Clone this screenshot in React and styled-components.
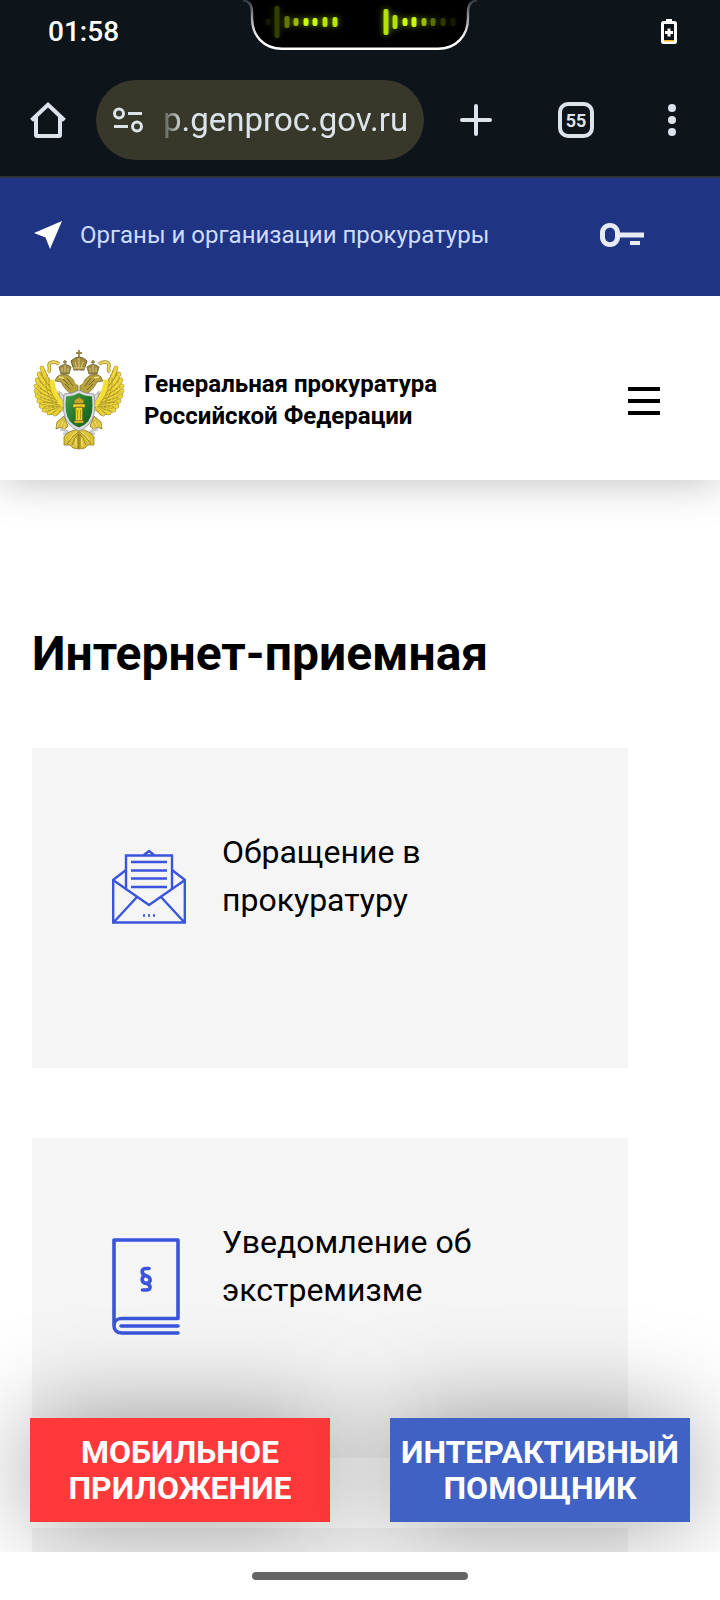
import styled, { createGlobalStyle } from "styled-components";

const GlobalStyle = createGlobalStyle`
  * {
    box-sizing: border-box;
  }

  body {
    margin: 0;
    background-color: #fff;
    color: #000;
    font-family: Roboto, "Noto Sans", sans-serif;
  }

  button {
    padding: 0;
    border: 0;
    background: none;
    color: inherit;
    font: inherit;
    cursor: pointer;
  }

  a {
    color: inherit;
    text-decoration: none;
  }

  svg {
    display: block;
    flex-shrink: 0;
  }
`;

const Screen = styled.div`
  display: flex;
  flex-direction: column;
  height: 100vh;
`;

/* phone status bar and browser toolbar */

const StatusBar = styled.div`
  display: grid;
  grid-template-columns: 1fr auto 1fr;
  align-items: center;
  height: 64px;
  padding: 0 43px;
  background-color: #0d141a;
  color: #fff;

  > time {
    padding-left: 5px;
    font-size: 28px;
    font-weight: 500;
    line-height: 32px;
  }

  > .notch {
    align-self: start;
  }

  > .battery {
    justify-self: end;
  }
`;

const Toolbar = styled.div`
  display: grid;
  grid-template-columns: 96px minmax(0, 1fr) 104px 96px 96px;
  align-items: center;
  height: 114px;
  border-bottom: 2px solid #2c333b;
  background-color: #0d141a;
  color: #dde3ea;
`;

const ToolButton = styled.button`
  display: flex;
  justify-content: center;
  align-items: center;
  height: 80px;
`;

const TabCount = styled.span`
  display: flex;
  justify-content: center;
  align-items: center;
  width: 36px;
  height: 36px;
  border: 4px solid #dde3ea;
  border-radius: 10px;
  font-size: 18px;
  font-weight: 700;
`;

const AddressBar = styled.div`
  display: flex;
  align-items: center;
  gap: 20px;
  height: 80px;
  padding: 0 12px 0 16px;
  border-radius: 40px;
  background-color: #373829;

  > input {
    flex: 1;
    min-width: 0;
    padding: 0;
    border: 0;
    outline: 0;
    background: none;
    color: #dde3ea;
    font-family: Roboto, sans-serif;
    font-size: 33px;
    line-height: 40px;
    mask-image: linear-gradient(to right, rgba(0, 0, 0, 0.2), #000 20px);
  }
`;

/* site */

const Viewport = styled.div`
  position: relative;
  flex: 1;
  min-height: 0;
`;

const Scroller = styled.div`
  height: 100%;
  overflow-y: auto;
  scrollbar-width: none;
`;

const TopBar = styled.div`
  position: relative;
  z-index: 1;
  display: flex;
  justify-content: space-between;
  align-items: center;
  height: 118px;
  padding: 0 76px 4px 34px;
  background-color: #1f3583;

  > a {
    display: flex;
    align-items: center;
    gap: 18px;
    color: #cfdcff;
    font-size: 24px;
    line-height: 32px;
  }
`;

const Header = styled.header`
  display: flex;
  justify-content: space-between;
  align-items: center;
  padding: 54px 60px 30px 32px;
  background-color: #fff;
  box-shadow: 0 2px 40px rgba(0, 0, 0, 0.25);
`;

const Brand = styled.a`
  display: flex;
  align-items: center;
  gap: 18px;
  font-size: 24px;
  font-weight: 700;
  line-height: 32px;
`;

const MenuButton = styled.button`
  display: flex;
  flex-direction: column;
  gap: 8px;
  width: 32px;
  padding-top: 2px;

  > span {
    height: 4px;
    background-color: #000;
  }
`;

const Main = styled.main`
  padding: 144px 92px 0 32px;

  > h1 {
    margin: 0 0 64px;
    font-size: 48px;
    font-weight: 700;
    line-height: 60px;
  }
`;

const CardList = styled.div`
  display: flex;
  flex-direction: column;
  gap: 70px;
`;

const Card = styled.a`
  display: grid;
  grid-template-columns: 110px 1fr;
  align-items: start;
  height: 320px;
  padding: 80px;
  background-color: #f5f5f5;
  font-size: 32px;
  line-height: 48px;

  > svg {
    margin-top: 20px;
  }
`;

const FloatingBar = styled.div`
  position: absolute;
  right: 0;
  bottom: 0;
  left: 0;
  display: grid;
  grid-template-columns: 1fr 1fr;
  gap: 60px;
  padding: 120px 30px 30px;
  overflow: hidden;
  pointer-events: none;
`;

const FloatingButton = styled.button`
  padding: 16px 0;
  background-color: ${(props) => props.$color};
  box-shadow: 0 0 100px rgba(0, 0, 0, 0.4);
  color: #fff;
  font-size: 32px;
  font-weight: 700;
  line-height: 36px;
  text-transform: uppercase;
  pointer-events: auto;
`;

const GestureBar = styled.div`
  display: flex;
  justify-content: center;
  align-items: center;
  height: 48px;
  background-color: #fff;

  > span {
    width: 30%;
    height: 8px;
    border-radius: 4px;
    background-color: #666;
  }
`;

// x, top, bottom, color
const equalizer = [
  [28, 19, 25, "#161b00"],
  [37, 6, 38, "#333f00"],
  [47, 16, 28, "#627900"],
  [56, 18, 26, "#98bd00"],
  [66, 18, 26, "#ccff00"],
  [75, 18, 26, "#ccff00"],
  [85, 17, 27, "#b5e300"],
  [95, 17, 27, "#b9e800"],
  [146, 9, 35, "#b5e300"],
  [155, 15, 29, "#b5e300"],
  [165, 18, 26, "#ccff00"],
  [174, 17, 27, "#ccff00"],
  [184, 18, 26, "#98bd00"],
  [193, 18, 26, "#586e00"],
  [203, 18, 26, "#2e3900"],
  [213, 18, 26, "#161b00"],
];

const Notch = () => (
  <svg className="notch" width="240" height="52" viewBox="0 0 240 52" fill="none">
    <defs>
      <linearGradient id="edge" x1="0" y1="0" x2="0" y2="50" gradientUnits="userSpaceOnUse">
        <stop offset="0" stopColor="#2d343a" />
        <stop offset="0.3" stopColor="#909396" />
        <stop offset="0.8" stopColor="#fff" />
      </linearGradient>
      <filter id="glow" x="0" y="0" width="240" height="52" filterUnits="userSpaceOnUse">
        <feGaussianBlur stdDeviation="3" />
      </filter>
    </defs>
    <path
      d="M3 0C9 1 12 5 12 11V18C12 36 24 48.800 42 48.800H198C216 48.800 228 36 228 18V11C228 5 231 1 237 0"
      fill="#000"
      stroke="url(#edge)"
      strokeWidth="2.400"
    />
    <g filter="url(#glow)" opacity="0.5">
      {equalizer.map(([x, top, bottom, color]) => (
        <rect key={x} x={x - 3} y={top} width="6" height={bottom - top} fill={color} />
      ))}
    </g>
    {equalizer.map(([x, top, bottom, color]) => (
      <rect
        key={x}
        x={x - 2.5}
        y={top}
        width="5"
        height={bottom - top}
        rx="2"
        fill={color}
      />
    ))}
  </svg>
);

const BatteryIcon = () => (
  <svg className="battery" width="16" height="26" viewBox="0 0 16 26">
    <path d="M5 0h6v3H5z" fill="#fff" />
    <rect x="1.5" y="3.5" width="13" height="20" rx="1" fill="none" stroke="#fff" strokeWidth="3" />
    <path d="M3 21h10v1.500H3z" fill="#f5b829" />
    <path d="M8 9.500v8M4 13.500h8" stroke="#fff" strokeWidth="3" />
  </svg>
);

const HomeIcon = () => (
  <svg width="36" height="36" viewBox="0 0 36 36" fill="none" stroke="currentColor" strokeWidth="4">
    <path d="M1.500 18.300L18 2.800L34.500 18.300" />
    <path d="M6 14V33a1 1 0 0 0 1 1H29a1 1 0 0 0 1-1V14" />
  </svg>
);

const TuneIcon = () => (
  <svg width="31" height="28" viewBox="0 0 31 28" fill="none" stroke="#dde3ea" strokeWidth="3">
    <circle cx="7" cy="7.500" r="4.500" />
    <path d="M16 7.500h14M2 20.500h14" />
    <circle cx="25" cy="20.500" r="4.500" />
  </svg>
);

const PlusIcon = () => (
  <svg width="32" height="32" viewBox="0 0 32 32" stroke="currentColor" strokeWidth="4" strokeLinecap="round">
    <path d="M16 2v28M2 16h28" />
  </svg>
);

const DotsIcon = () => (
  <svg width="8" height="32" viewBox="0 0 8 32" fill="currentColor">
    <circle cx="4" cy="4" r="4" />
    <circle cx="4" cy="16" r="4" />
    <circle cx="4" cy="28" r="4" />
  </svg>
);

const ArrowIcon = () => (
  <svg width="28" height="28" viewBox="0 0 28 28" fill="#fff">
    <path d="M28 0L0 12L11.500 16.500L16 28z" />
  </svg>
);

const KeyIcon = () => (
  <svg width="44" height="24" viewBox="0 0 44 24" fill="#e8ebf3">
    <path
      fillRule="evenodd"
      d="M10 0c6 0 10 4.500 10 10v4c0 5.500-4 10-10 10S0 19.500 0 14v-4C0 4.500 4 0 10 0zm0 4.800c-3 0-5 2.200-5 5.200v4c0 3 2 5.200 5 5.200s5-2.200 5-5.200v-4c0-3-2-5.200-5-5.200z"
    />
    <path d="M19 9.500h25v5H19zM30 18h10v4H30z" />
  </svg>
);

// feather tips of the left wing and where each one grows from
const feathers = [
  [9, 18, 26, 47],
  [6, 24, 26, 48],
  [4, 30, 26, 49],
  [3, 36, 26, 50],
  [3, 41, 27, 52],
  [4, 46, 28, 54],
  [6, 51, 28, 55],
  [8, 56, 29, 56],
  [11, 60, 29, 57],
  [16, 63, 29, 57],
  [22, 64, 30, 57],
];

const EagleHalf = () => (
  <g>
    <path d="M9 19L25 46L30 60L20 62L8 56L5 44L5 28z" fill="#c2aa33" />
    <g strokeLinecap="round">
      {feathers.map(([x, y, fromX, fromY]) => (
        <g key={y}>
          <path d={`M${fromX} ${fromY}Q${(x + fromX) / 2 - 3} ${(y + fromY) / 2 + 3} ${x} ${y}`} stroke="#a08e38" strokeWidth="4.600" />
          <path d={`M${fromX} ${fromY}Q${(x + fromX) / 2 - 3} ${(y + fromY) / 2 + 3} ${x} ${y}`} stroke="#ecd536" strokeWidth="3.600" />
          <path
            d={`M${fromX} ${fromY}L${x + 2} ${y + 1}`}
            stroke="#a38c22"
            strokeWidth="0.900"
            strokeDasharray="2 2"
          />
        </g>
      ))}
      <path d="M19 32Q21 46 29 54" stroke="#f5de33" strokeWidth="5" />
      <path d="M16 30Q16 44 25 52M13 28Q12 42 20 52" stroke="#b59c2a" strokeWidth="0.900" strokeDasharray="3 1" />
    </g>
    {/* ribbon */}
    <path d="M15 22C19 20 14 15 17 13C20 11 23 12 26 14" stroke="#a18b2e" strokeWidth="3.600" />
    <path d="M15 22C19 20 14 15 17 13C20 11 23 12 26 14" stroke="#ead65a" strokeWidth="2" />
    {/* neck and head */}
    <path
      d="M39 44C34 42 30 36 28 32L22 31L24 27C27 24 32 24 36 26C40 29 42 32 45 34V44z"
      fill="#b7a23c"
      stroke="#7b6d31"
      strokeWidth="0.800"
    />
    <path d="M30 29l6 6M34 28l6 8M32 34l6 6" stroke="#71652c" strokeWidth="1" />
    <path d="M26 27l5 1" stroke="#f0df74" strokeWidth="1.500" />
    <path d="M26 41l5 5 1 8-5-7z" fill="#d5d5db" stroke="#96969c" strokeWidth="0.600" />
    {/* small crown */}
    <path d="M28 24L26 17Q32 12 38 17L36 24z" fill="#a08b43" stroke="#675d34" strokeWidth="0.800" />
    <path d="M29 18v4M32 15v7M35 18v4" stroke="#d8c884" />
    <path d="M32 10v5M30 12h4" stroke="#8b7c47" strokeWidth="1.400" />
    {/* leg */}
    <path d="M31 66L24 72L23 79L28 77L31 80L35 76z" fill="#d9c03a" stroke="#84742d" strokeWidth="0.800" />
    <path d="M26 72l-2 5M30 71l-2 6M33 73l-2 5" stroke="#f3e16b" />
    <path d="M27 79l7 2 4 6M30 84l5-1" stroke="#c5c5cb" strokeWidth="2.400" />
    {/* tail */}
    <path d="M46 79Q34 81 31 87L31 95L37 95L40 98L46 99z" fill="#dcc236" stroke="#8b792b" strokeWidth="0.800" />
    <path d="M45 82Q38 87 34 94M45 84Q41 89 39 95M45 84V98" stroke="#927d27" strokeWidth="0.900" />
    <path d="M44 82Q39 84 36 90M43 88v8" stroke="#f7ea72" />
  </g>
);

const Emblem = () => (
  <svg width="94" height="100" viewBox="-1 0 94 100" fill="none" role="img" aria-label="Герб">
    <defs>
      <linearGradient id="shield" x1="0" y1="0" x2="1" y2="1">
        <stop offset="0" stopColor="#43a047" />
        <stop offset="0.500" stopColor="#227a2c" />
        <stop offset="1" stopColor="#125c1d" />
      </linearGradient>
    </defs>
    <EagleHalf />
    <g transform="translate(92 0) scale(-1 1)">
      <EagleHalf />
    </g>
    <path d="M41 20L38 11Q46 3 54 11L51 20z" fill="#a48f40" stroke="#6b5f34" />
    <path d="M42 12l2 6M46 8v10M50 12l-2 6M40 18h12" stroke="#dbc878" />
    <path d="M46 0v7M43 3h6" stroke="#9b8744" strokeWidth="1.800" />
    <path d="M46 20l6 6-2 7-4 3-4-3-2-7z" fill="#fff" />
    <path
      d="M31 44Q40 44 46 40Q52 44 61 44Q64 66 56 74Q52 79 46 81Q40 79 36 74Q28 66 31 44z"
      fill="#d9d9de"
      stroke="#8e8e94"
      strokeWidth="0.800"
    />
    <path
      d="M33 46.500Q41 46 46 43Q51 46 59 46.500Q61 64 55 71.500Q51 76 46 77.500Q41 76 37 71.500Q31 64 33 46.500z"
      fill="url(#shield)"
    />
    <path d="M42.500 57h7v14h-7zM40 54h12v3.500H40zM41.500 70.500h9v2.500h-9z" fill="#ecd02c" stroke="#7d661a" strokeWidth="0.600" />
    <path d="M42 53.500Q40 49.500 43 49Q46 46 49 49Q52 49.500 50 53.500z" fill="#c9a827" stroke="#76611b" strokeWidth="0.600" />
    <path d="M46 45v4M44.500 60v9M47.500 60v9" stroke="#a28520" strokeWidth="0.800" />
  </svg>
);

const LetterIcon = () => (
  <svg width="74" height="76" viewBox="0 0 74 76" fill="none" stroke="#3a55dc" strokeWidth="2.400">
    <path d="M32 7L37 3L42 7M14 42V7.500H60V42" />
    <path d="M14 22L1 32L37 57L73 32L60 22" />
    <path d="M1.200 32V74.500H72.800V32M1 75L25 49M73 75L49 49" />
    <path d="M19 14H55M19 22.500H55M19 30.500H55M19 39H55" />
    <path d="M31 67.500h2M36 67.500h2M41 67.500h2" />
  </svg>
);

const LawBookIcon = () => (
  <svg
    width="68"
    height="97"
    viewBox="0 0 68 97"
    fill="none"
    stroke="#3a55dc"
    strokeWidth="3.600"
    strokeLinecap="round"
    strokeLinejoin="round"
  >
    <path d="M2 88V2H66V80.500H9.500C-0.500 80.500-0.500 95 9.500 95H66M9 88H66" />
    <path d="M37 30.500H34C29 30.500 29 36 33.500 37.500C39 39 40 44 34.500 45.500C29 45 29 39.500 33 37.500M34.500 45.500C39.500 47 39 52 34 52H30.500" />
  </svg>
);

const App = () => {
  return (
    <Screen>
      <GlobalStyle />

      <StatusBar>
        <time>01:58</time>
        <Notch />
        <BatteryIcon />
      </StatusBar>

      <Toolbar>
        <ToolButton aria-label="Главная страница">
          <HomeIcon />
        </ToolButton>
        <AddressBar>
          <TuneIcon />
          <input type="text" aria-label="Адрес сайта" defaultValue="p.genproc.gov.ru" />
        </AddressBar>
        <ToolButton aria-label="Новая вкладка">
          <PlusIcon />
        </ToolButton>
        <ToolButton aria-label="Вкладки">
          <TabCount>55</TabCount>
        </ToolButton>
        <ToolButton aria-label="Меню браузера">
          <DotsIcon />
        </ToolButton>
      </Toolbar>

      <Viewport>
        <Scroller>
          <TopBar>
            <a href="#organs">
              <ArrowIcon />
              Органы и организации прокуратуры
            </a>
            <a href="#login" aria-label="Вход">
              <KeyIcon />
            </a>
          </TopBar>

          <Header>
            <Brand href="#home">
              <Emblem />
              <span>
                Генеральная прокуратура
                <br />
                Российской Федерации
              </span>
            </Brand>
            <MenuButton aria-label="Меню">
              <span />
              <span />
              <span />
            </MenuButton>
          </Header>

          <Main>
            <h1>Интернет-приемная</h1>
            <CardList>
              <Card href="#appeal">
                <LetterIcon />
                <span>Обращение в прокуратуру</span>
              </Card>
              <Card href="#extremism">
                <LawBookIcon />
                <span>Уведомление об экстремизме</span>
              </Card>
              <Card as="div" />
            </CardList>
          </Main>
        </Scroller>

        <FloatingBar>
          <FloatingButton $color="#ff3939">
            Мобильное
            <br />
            приложение
          </FloatingButton>
          <FloatingButton $color="#4062c4">
            Интерактивный
            <br />
            помощник
          </FloatingButton>
        </FloatingBar>
      </Viewport>

      <GestureBar>
        <span />
      </GestureBar>
    </Screen>
  );
};

export default App;
